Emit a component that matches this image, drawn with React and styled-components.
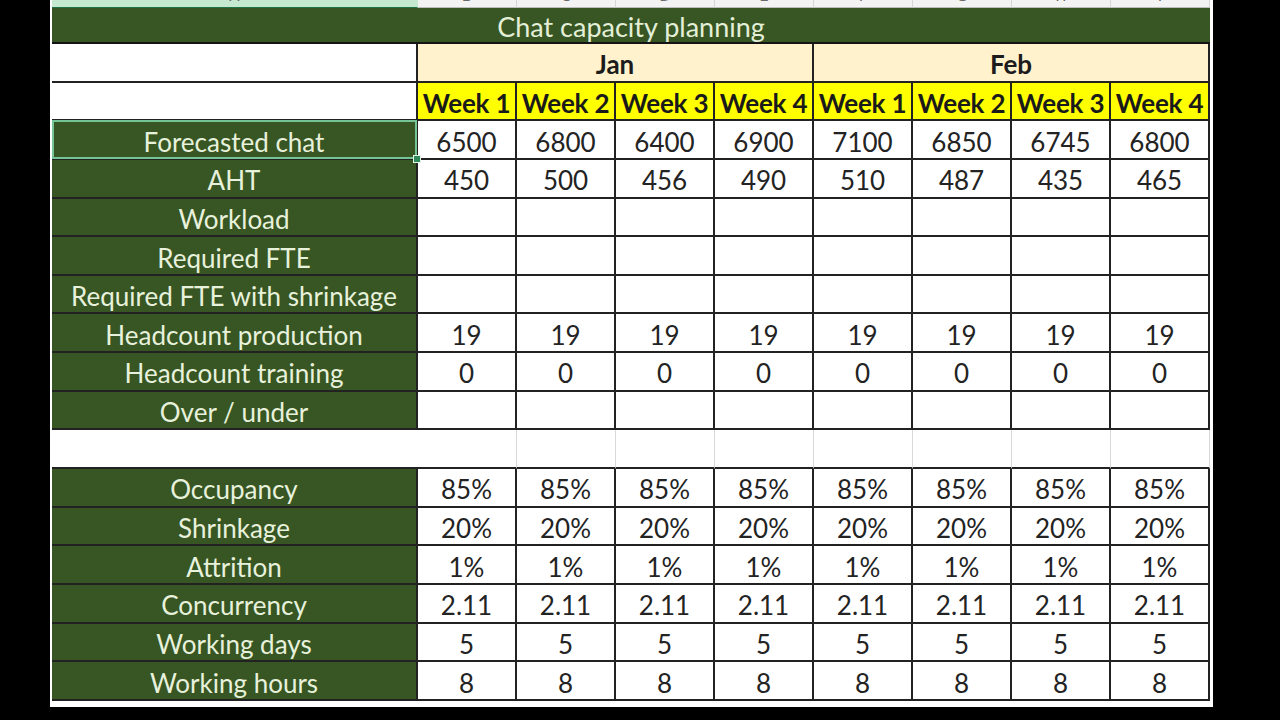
import React from "react";
import styled, { createGlobalStyle, css } from "styled-components";

const Global = createGlobalStyle`
  html, body { margin: 0; padding: 0; background: #000; }
  body { width: 1280px; height: 720px; overflow: hidden; }
`;

const Page = styled.div`
  width: 1280px;
  height: 720px;
  background: #000;
  overflow: hidden;
  font-family: Lato, "Open Sans", sans-serif;
`;

const Sheet = styled.div`
  margin-left: 50px;
  width: 1163px;
  height: 707px;
  background: #fff;
  padding-left: 2px;
  box-sizing: border-box;
  display: grid;
  grid-template-columns: 366px repeat(8, 99px);
  grid-template-rows: 8px 36px repeat(17, 38.65px);
`;

const ColHeader = styled.div`
  box-sizing: border-box;
  overflow: hidden;
  display: flex;
  align-items: flex-end;
  justify-content: center;
  background: ${(p) => (p.$active ? "#c4e8d0" : "#f3f3f3")};
  border-right: 1px solid ${(p) => (p.$active ? "#c4e8d0" : "#d6d6d6")};
  border-bottom: 1px solid ${(p) => (p.$active ? "#217346" : "#bdbdbd")};
  color: #6a6a6a;
  font-family: "DejaVu Sans", sans-serif;
  font-size: 15px;
  span {
    line-height: 16px;
    margin-bottom: 3px;
  }
`;

const Title = styled.div`
  grid-column: 1 / -1;
  box-sizing: border-box;
  background: #375623;
  border-bottom: 2px solid #141414;
  color: #e4efd8;
  font-size: 27px;
  display: flex;
  align-items: center;
  justify-content: center;
  padding-top: 2px;
`;

const cellBase = css`
  box-sizing: border-box;
  display: flex;
  align-items: center;
  justify-content: center;
  font-size: 26px;
  white-space: nowrap;
  padding-top: 4px;
  border-right: 2px solid #222;
  border-bottom: 2px solid #222;
`;

const EmptyLead = styled.div`
  ${cellBase}
  background: #fff;
`;

const Month = styled.div`
  ${cellBase}
  grid-column: span 4;
  background: #fff2cc;
  font-weight: 700;
  color: #1c1c1c;
  font-size: 26px;
`;

const Week = styled.div`
  ${cellBase}
  background: #ffff00;
  font-weight: 700;
  color: #1a1a1a;
  font-size: 26px;
  letter-spacing: -0.2px;
`;

const Label = styled.div`
  ${cellBase}
  position: relative;
  background: #375623;
  color: #e8f1dc;
  ${(p) =>
    p.$selected &&
    css`
      &::after {
        content: "";
        position: absolute;
        left: 0;
        top: -1px;
        right: -1px;
        bottom: -1px;
        border: 2px solid #74c496;
      }
      &::before {
        content: "";
        position: absolute;
        right: -5px;
        bottom: -5px;
        width: 6px;
        height: 6px;
        background: #2f8a58;
        border: 1px solid #e6f5ec;
        z-index: 2;
      }
    `}
`;

const Value = styled.div`
  ${cellBase}
  background: #fff;
  color: #232323;
`;

const GapLead = styled.div`
  box-sizing: border-box;
  background: #fff;
  border-bottom: 2px solid #222;
`;

const GapCell = styled.div`
  box-sizing: border-box;
  background: #fff;
  border-right: 1px solid #d9d9d9;
  border-bottom: 2px solid #222;
`;

const letters = ["A", "B", "C", "D", "E", "F", "G", "H", "I"];
const months = ["Jan", "Feb"];
const weeks = ["Week 1", "Week 2", "Week 3", "Week 4"];

const top = [
  { label: "Forecasted chat", values: [6500, 6800, 6400, 6900, 7100, 6850, 6745, 6800], selected: true },
  { label: "AHT", values: [450, 500, 456, 490, 510, 487, 435, 465] },
  { label: "Workload" },
  { label: "Required FTE" },
  { label: "Required FTE with shrinkage" },
  { label: "Headcount production", values: Array(8).fill(19) },
  { label: "Headcount training", values: Array(8).fill(0) },
  { label: "Over / under" },
];

const bottom = [
  { label: "Occupancy", values: Array(8).fill("85%") },
  { label: "Shrinkage", values: Array(8).fill("20%") },
  { label: "Attrition", values: Array(8).fill("1%") },
  { label: "Concurrency", values: Array(8).fill("2.11") },
  { label: "Working days", values: Array(8).fill(5) },
  { label: "Working hours", values: Array(8).fill(8) },
];

function DataRow({ row }) {
  return (
    <>
      <Label $selected={row.selected}>{row.label}</Label>
      {Array.from({ length: 8 }).map((_, i) => (
        <Value key={i}>{row.values ? row.values[i] : ""}</Value>
      ))}
    </>
  );
}

export default function App() {
  return (
    <Page>
      <Global />
      <Sheet>
        {letters.map((l, i) => (
          <ColHeader key={l} $active={i === 0}>
            <span>{l}</span>
          </ColHeader>
        ))}
        <Title>Chat capacity planning</Title>
        <EmptyLead />
        {months.map((m) => (
          <Month key={m}>{m}</Month>
        ))}
        <EmptyLead />
        {months.map((m) =>
          weeks.map((w) => <Week key={m + w}>{w}</Week>)
        )}
        {top.map((r) => (
          <DataRow key={r.label} row={r} />
        ))}
        <GapLead />
        {Array.from({ length: 8 }).map((_, i) => (
          <GapCell key={i} />
        ))}
        {bottom.map((r) => (
          <DataRow key={r.label} row={r} />
        ))}
      </Sheet>
    </Page>
  );
}
